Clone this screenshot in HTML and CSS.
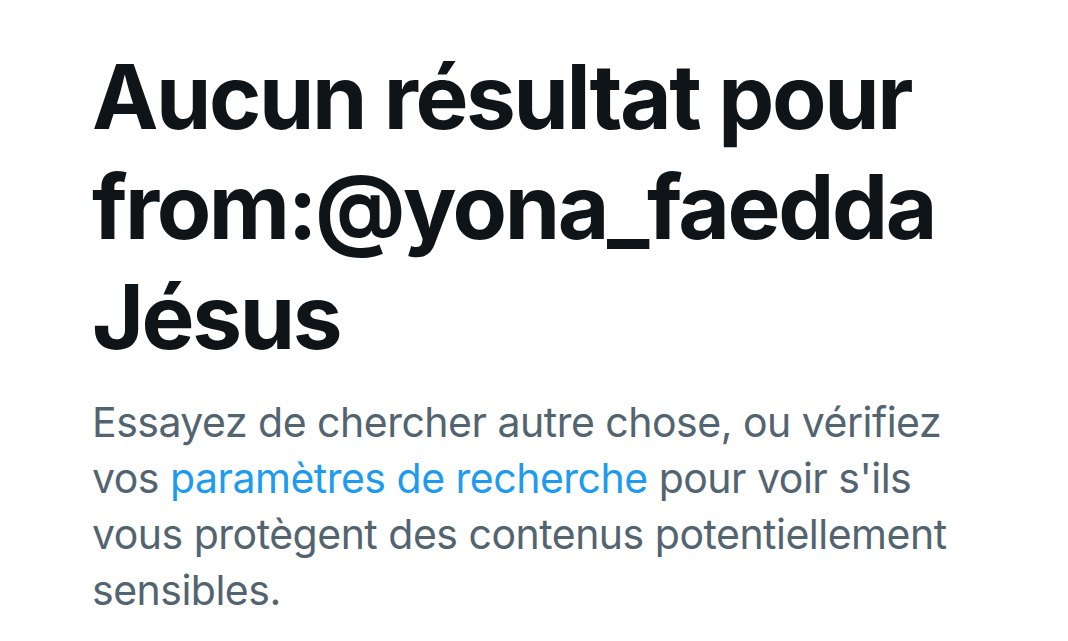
FILE: index.html
```html
<!DOCTYPE html>
<html lang="fr">
<head>
<meta charset="utf-8">
<link rel="stylesheet" href="styles.css">
</head>
<body>
<main class="empty">
  <h1 class="empty-title">Aucun résultat pour from:@yona_faedda Jésus</h1>
  <p class="empty-text">Essayez de chercher autre chose, ou vérifiez vos <a class="empty-link" href="#">paramètres de recherche</a> pour voir s'ils vous protègent des contenus potentiellement sensibles.</p>
</main>
</body>
</html>
```
FILE: styles.css
```css
html, body {
  margin: 0;
  padding: 0;
  background: #ffffff;
}
body {
  font-family: Inter, "Noto Sans", sans-serif;
  width: 1068px;
  height: 641px;
  overflow: hidden;
}
.empty {
  padding: 42px 92px 0 92px;
  display: flex;
  flex-direction: column;
}
.empty-title {
  margin: 0;
  font-size: 89px;
  line-height: 110px;
  font-weight: 700;
  color: #0f1419;
  letter-spacing: -2.4px;
}
.empty-text {
  margin: 22px 0 0 0;
  font-size: 41px;
  line-height: 56px;
  font-weight: 400;
  color: #536471;
  letter-spacing: -0.5px;
}
.empty-link {
  color: #1d9bf0;
  text-decoration: none;
}
```
